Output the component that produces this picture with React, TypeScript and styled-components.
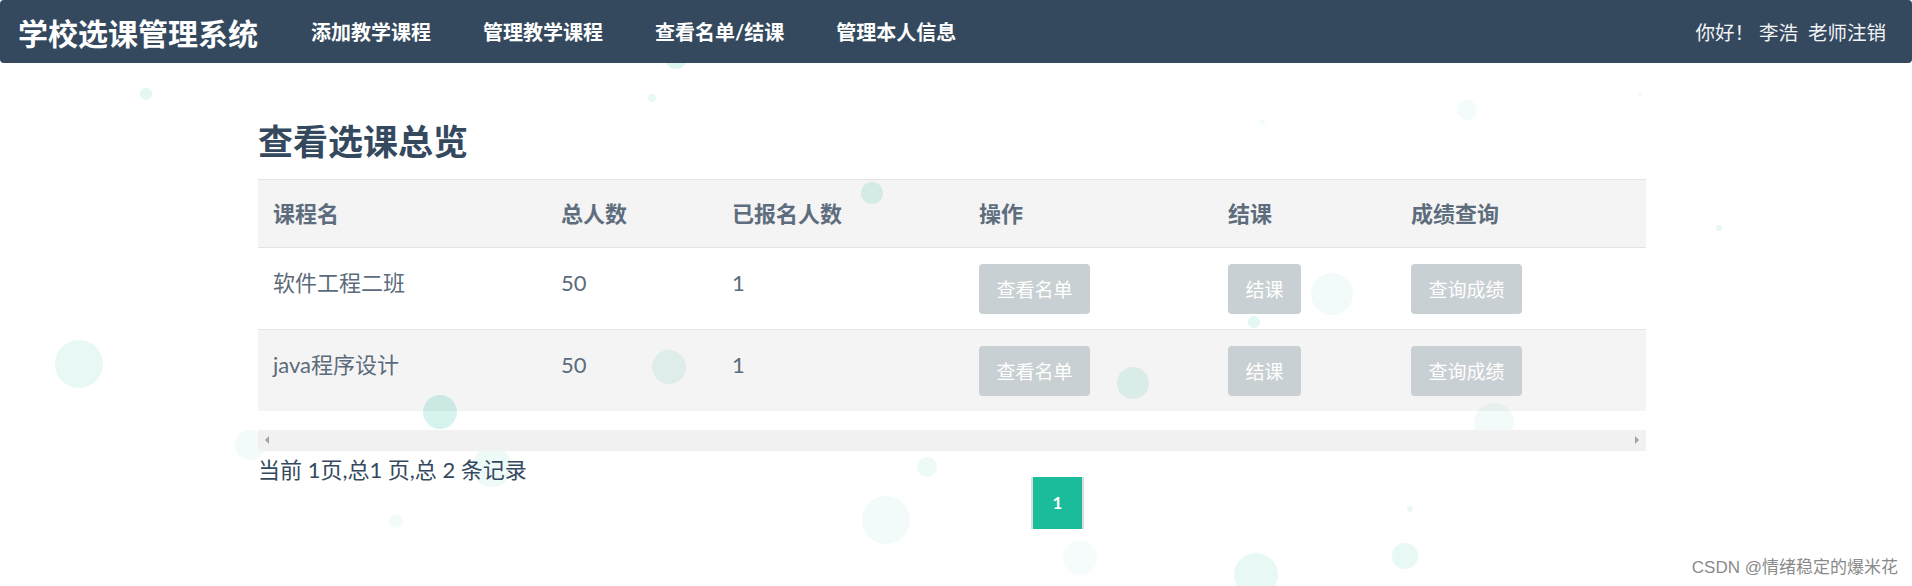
import React from "react";
import styled, { createGlobalStyle } from "styled-components";

const GlobalStyle = createGlobalStyle`
  html, body {
    margin: 0;
    padding: 0;
    background: #ffffff;
  }
  body {
    font-family: Lato, "Noto Sans CJK SC", sans-serif;
    color: #34495e;
  }
`;

interface Course {
    name: string;
    total: number;
    enrolled: number;
}

const courses: Course[] = [
    { name: "软件工程二班", total: 50, enrolled: 1 },
    { name: "java程序设计", total: 50, enrolled: 1 },
];

const columns = [
    { title: "课程名", width: 288 },
    { title: "总人数", width: 171 },
    { title: "已报名人数", width: 247 },
    { title: "操作", width: 249 },
    { title: "结课", width: 183 },
    { title: "成绩查询", width: 250 },
];

// x, y, r, alpha
const bubbles: [number, number, number, number][] = [
    [146, 94, 6, 0.12], [79, 364, 24, 0.1], [440, 412, 17, 0.18], [669, 367, 17, 0.1],
    [872, 193, 11, 0.15], [1133, 383, 16, 0.12], [1332, 294, 21, 0.06], [1254, 322, 6, 0.12],
    [1494, 423, 20, 0.06], [927, 467, 10, 0.08], [886, 520, 24, 0.06], [1080, 558, 17, 0.04],
    [1256, 575, 22, 0.1], [1405, 556, 13, 0.1], [492, 467, 20, 0.08], [396, 521, 7, 0.06],
    [250, 445, 15, 0.06], [676, 58, 11, 0.15], [652, 98, 4, 0.1], [1467, 110, 10, 0.05],
    [1719, 228, 3, 0.1], [1410, 509, 3, 0.1], [1262, 122, 3, 0.05], [1640, 94, 2, 0.05],
];

const Page = styled.div`
  position: relative;
  min-height: 586px;
  overflow: hidden;
`;

const BubbleLayer = styled.div`
  position: absolute;
  inset: 0;
  pointer-events: none;
  z-index: 0;
`;

const Bubble = styled.span`
  position: absolute;
  border-radius: 50%;
`;

const NavBar = styled.nav`
  position: relative;
  z-index: 1;
  display: flex;
  align-items: center;
  height: 63px;
  padding: 0 26px 0 18px;
  background: #34495e;
  border-radius: 4px;
  color: #ffffff;
`;

const Brand = styled.div`
  font-size: 30px;
  font-weight: 700;
`;

const NavList = styled.ul`
  display: flex;
  list-style: none;
  margin: 0 0 0 27px;
  padding: 0;
`;

const NavLink = styled.li`
  padding: 0 26px;
  font-size: 20px;
  font-weight: 700;
  cursor: pointer;
`;

const UserInfo = styled.div`
  margin-left: auto;
  font-size: 19.5px;
  color: #f2f4f6;
  white-space: pre;
`;

const Main = styled.main`
  position: relative;
  z-index: 1;
  width: 1388px;
  margin-left: 258px;
  padding-top: 59px;
`;

const Heading = styled.h1`
  margin: 0 0 18px;
  font-size: 35px;
  line-height: 1.1;
  font-weight: 700;
  color: #34495e;
`;

const Table = styled.table`
  width: 100%;
  border-collapse: collapse;
  table-layout: fixed;
  margin-bottom: 19px;
`;

const Th = styled.th<{ $w: number }>`
  box-sizing: border-box;
  width: ${({ $w }) => $w}px;
  padding: 15px;
  text-align: left;
  font-size: 22px;
  line-height: 37px;
  font-weight: 700;
  color: #5d6d7d;
  background: rgba(0, 0, 0, 0.045);
  border-top: 1px solid #e4e4e4;
`;

const Row = styled.tr<{ $striped: boolean }>`
  background: ${({ $striped }) => ($striped ? "rgba(0, 0, 0, 0.045)" : "transparent")};
`;

const Td = styled.td`
  padding: 16px 15px 15px;
  vertical-align: top;
  font-size: 22px;
  line-height: 37px;
  color: #5b6b7b;
  border-top: 1px solid #e4e4e4;
`;

const Button = styled.button`
  display: inline-flex;
  align-items: center;
  height: 50px;
  padding: 0 17.5px;
  border: none;
  border-radius: 4px;
  background: #c9d0d3;
  color: #ffffff;
  font-family: Lato, "Noto Sans CJK SC", sans-serif;
  font-size: 19px;
  cursor: pointer;
`;

const ScrollTrack = styled.div`
  display: flex;
  align-items: center;
  justify-content: space-between;
  height: 21px;
  padding: 0 7px;
  background: #f1f1f1;
`;

const Arrow = styled.span<{ $dir: "left" | "right" }>`
  width: 0;
  height: 0;
  border-top: 4px solid transparent;
  border-bottom: 4px solid transparent;
  ${({ $dir }) =>
        $dir === "left"
            ? "border-right: 4px solid #a3a3a3;"
            : "border-left: 4px solid #a3a3a3;"}
`;

const Footer = styled.div`
  display: grid;
  grid-template-columns: 773px auto;
  align-items: start;
`;

const Summary = styled.div`
  font-size: 22px;
  line-height: 37px;
  color: #34495e;
`;

const Pagination = styled.ul`
  display: flex;
  list-style: none;
  margin: 26px 0 0;
  padding: 0;
`;

const PageItem = styled.li<{ $active: boolean }>`
  display: flex;
  align-items: center;
  justify-content: center;
  width: 49px;
  height: 52px;
  border-left: 2px solid #dddddd;
  border-right: 2px solid #dddddd;
  background: ${({ $active }) => ($active ? "#1abc9c" : "#ffffff")};
  color: ${({ $active }) => ($active ? "#ffffff" : "#34495e")};
  font-size: 17px;
  font-weight: 700;
`;

const Watermark = styled.div`
  position: absolute;
  right: 14px;
  bottom: 8px;
  z-index: 2;
  font-family: "Liberation Sans", "Noto Sans CJK SC", sans-serif;
  font-size: 17px;
  color: #8a8a8a;
  text-shadow: 0 0 2px #ffffff;
`;

const App = () => {
    return (
        <>
            <GlobalStyle />
            <Page>
                <BubbleLayer>
                    {bubbles.map(([x, y, r, a], i) => (
                        <Bubble
                            key={i}
                            style={{
                                left: x - r,
                                top: y - r,
                                width: r * 2,
                                height: r * 2,
                                background: `rgba(26, 188, 156, ${a})`,
                            }}
                        />
                    ))}
                </BubbleLayer>
                <NavBar>
                    <Brand>学校选课管理系统</Brand>
                    <NavList>
                        <NavLink>添加教学课程</NavLink>
                        <NavLink>管理教学课程</NavLink>
                        <NavLink>查看名单/结课</NavLink>
                        <NavLink>管理本人信息</NavLink>
                    </NavList>
                    <UserInfo>{"你好！ 李浩  老师注销"}</UserInfo>
                </NavBar>
                <Main>
                    <Heading>查看选课总览</Heading>
                    <Table>
                        <thead>
                            <tr>
                                {columns.map((col) => (
                                    <Th key={col.title} $w={col.width}>{col.title}</Th>
                                ))}
                            </tr>
                        </thead>
                        <tbody>
                            {courses.map((course, index) => (
                                <Row key={course.name} $striped={index % 2 === 1}>
                                    <Td>{course.name}</Td>
                                    <Td>{course.total}</Td>
                                    <Td>{course.enrolled}</Td>
                                    <Td><Button>查看名单</Button></Td>
                                    <Td><Button>结课</Button></Td>
                                    <Td><Button>查询成绩</Button></Td>
                                </Row>
                            ))}
                        </tbody>
                    </Table>
                    <ScrollTrack>
                        <Arrow $dir="left" />
                        <Arrow $dir="right" />
                    </ScrollTrack>
                    <Footer>
                        <Summary>当前 1页,总1 页,总 2 条记录</Summary>
                        <Pagination>
                            <PageItem $active>1</PageItem>
                        </Pagination>
                    </Footer>
                </Main>
                <Watermark>CSDN @情绪稳定的爆米花</Watermark>
            </Page>
        </>
    );
};

export default App;
